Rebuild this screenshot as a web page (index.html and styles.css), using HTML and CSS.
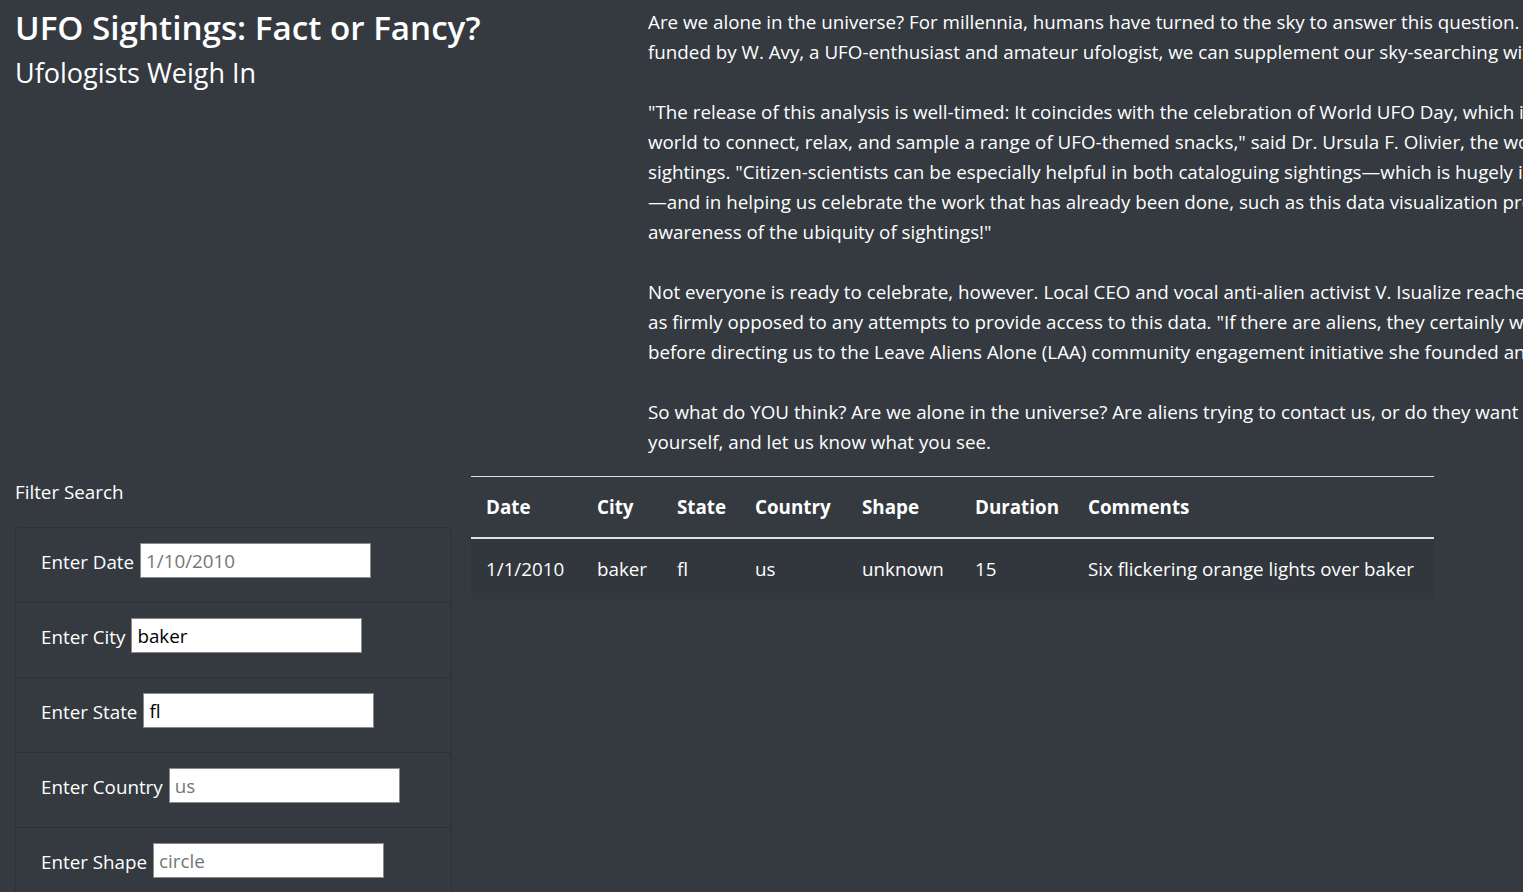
FILE: index.html
```html
<!DOCTYPE html>
<html lang="en">
<head>
<meta charset="utf-8">
<title>UFO Sightings: Fact or Fancy?</title>
<link rel="stylesheet" href="styles.css">
</head>
<body>
<div class="page">
  <div class="intro">
    <header class="intro-head">
      <h1 class="title">UFO Sightings: Fact or Fancy?</h1>
      <h2 class="subtitle">Ufologists Weigh In</h2>
    </header>
    <p class="intro-text">Are we alone in the universe? For millennia, humans have turned to the sky to answer this question. Now, thanks to a new data visualization<br>funded by W. Avy, a UFO-enthusiast and amateur ufologist, we can supplement our sky-searching with data-searching, too.<br><br>"The release of this analysis is well-timed: It coincides with the celebration of World UFO Day, which is a time for people all over the<br>world to connect, relax, and sample a range of UFO-themed snacks," said Dr. Ursula F. Olivier, the world's foremost expert on UFO<br>sightings. "Citizen-scientists can be especially helpful in both cataloguing sightings—which is hugely important to the field of ufology<br>—and in helping us celebrate the work that has already been done, such as this data visualization project, which will help raise<br>awareness of the ubiquity of sightings!"<br><br>Not everyone is ready to celebrate, however. Local CEO and vocal anti-alien activist V. Isualize reached out to our newsroom, describing herself<br>as firmly opposed to any attempts to provide access to this data. "If there are aliens, they certainly won't want to be found," she said,<br>before directing us to the Leave Aliens Alone (LAA) community engagement initiative she founded and chairs.<br><br>So what do YOU think? Are we alone in the universe? Are aliens trying to contact us, or do they want to be left alone? Dig through the data<br>yourself, and let us know what you see.</p>
  </div>

  <div class="lower">
    <aside class="filters">
      <h3 class="filter-title">Filter Search</h3>
      <ul class="filter-list">
        <li class="filter-item"><label for="datetime">Enter Date</label><input id="datetime" type="text" placeholder="1/10/2010"></li>
        <li class="filter-item"><label for="city">Enter City</label><input id="city" type="text" value="baker"></li>
        <li class="filter-item"><label for="state">Enter State</label><input id="state" type="text" value="fl"></li>
        <li class="filter-item"><label for="country">Enter Country</label><input id="country" type="text" placeholder="us"></li>
        <li class="filter-item"><label for="shape">Enter Shape</label><input id="shape" type="text" placeholder="circle"></li>
      </ul>
    </aside>

    <section class="results">
      <table class="ufo-table">
        <colgroup>
          <col class="c-date"><col class="c-city"><col class="c-state"><col class="c-country"><col class="c-shape"><col class="c-duration"><col class="c-comments">
        </colgroup>
        <thead>
          <tr><th>Date</th><th>City</th><th>State</th><th>Country</th><th>Shape</th><th>Duration</th><th>Comments</th></tr>
        </thead>
        <tbody>
          <tr><td>1/1/2010</td><td>baker</td><td>fl</td><td>us</td><td>unknown</td><td>15</td><td>Six flickering orange lights over baker</td></tr>
        </tbody>
      </table>
    </section>
  </div>
</div>
</body>
</html>
```

FILE: styles.css
```css
html, body {
  margin: 0;
  padding: 0;
  overflow: hidden;
}

body {
  background: #343a40;
  color: #fff;
  font-family: "Open Sans", "Noto Sans", sans-serif;
  font-size: 18.8px;
  line-height: 30px;
}

.page {
  padding: 0 15px;
  width: 2000px;
}

.intro {
  display: flex;
  align-items: flex-start;
}

.intro-head {
  flex: none;
  width: 618px;
}

.title {
  margin: 7px 0 0;
  font-size: 33.2px;
  line-height: 41px;
  font-weight: 600;
}

.subtitle {
  margin: 9px 0 0;
  font-size: 27px;
  line-height: 32px;
  font-weight: 400;
}

.intro-text {
  margin: 7px 0 0 15px;
  white-space: nowrap;
  line-height: 30px;
}

.lower {
  display: flex;
  align-items: flex-start;
  margin-top: 19px;
}

.filters {
  flex: none;
  width: 437px;
  margin-right: 19px;
}

.filter-title {
  margin: 1px 0 20px;
  font-size: 18.8px;
  line-height: 30px;
  font-weight: 400;
}

.filter-list {
  list-style: none;
  margin: 0;
  padding: 0;
  border: 1px solid rgba(0, 0, 0, 0.14);
  border-radius: 4px;
}

.filter-item {
  display: flex;
  align-items: center;
  padding: 15px 25px 24px;
  border-top: 1px solid rgba(0, 0, 0, 0.14);
}

.filter-item:first-child {
  border-top: 0;
}

.filter-item label {
  padding-top: 3px;
  margin-right: 6px;
}

.filter-item input {
  box-sizing: border-box;
  width: 231px;
  height: 35px;
  border: 1px solid #8a8a8a;
  border-radius: 0;
  background: #fff;
  color: #000;
  padding: 0 5px;
  font-family: "Open Sans", "Noto Sans", sans-serif;
  font-size: 18.8px;
  outline: none;
}

.filter-item input::placeholder {
  color: #757575;
}

.results {
  flex: none;
}

.ufo-table {
  width: 963px;
  table-layout: fixed;
  border-collapse: collapse;
}

.c-date { width: 111px; }
.c-city { width: 80px; }
.c-state { width: 78px; }
.c-country { width: 107px; }
.c-shape { width: 113px; }
.c-duration { width: 113px; }
.c-comments { width: 361px; }

.ufo-table th,
.ufo-table td {
  padding: 15px;
  text-align: left;
  line-height: 30px;
  white-space: nowrap;
}

.ufo-table th {
  font-weight: 700;
  border-top: 1px solid #dee2e6;
  border-bottom: 2px solid #dee2e6;
}

.ufo-table tbody tr {
  background: rgba(0, 0, 0, 0.05);
}
```
